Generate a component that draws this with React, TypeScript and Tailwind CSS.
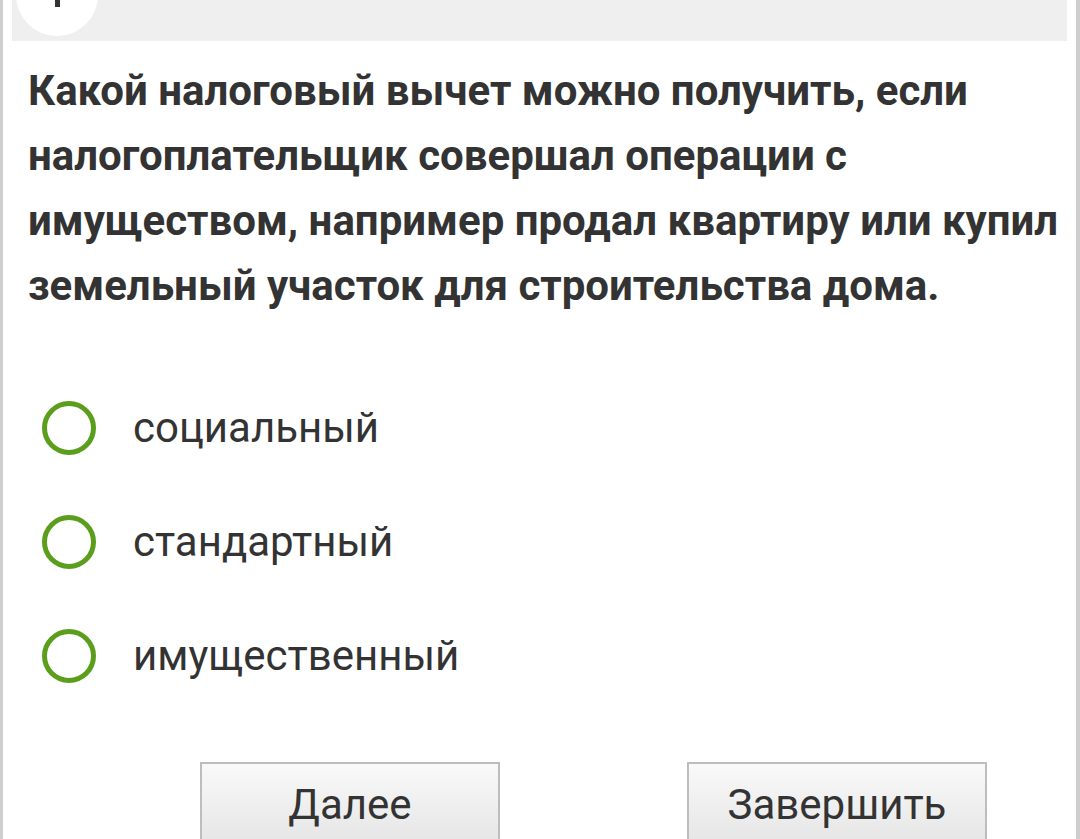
const OPTIONS = ["социальный", "стандартный", "имущественный"];

function Radio() {
  return <span className="block w-[54px] h-[54px] rounded-full border-[5px] border-[#5b9e1c] bg-white shrink-0" />;
}

export default function App() {
  return (
    <div className="w-[1080px] h-[839px] overflow-hidden bg-white font-['Roboto',sans-serif] text-[#333]">
      <div className="h-full border-l-[3px] border-r-[4px] border-[#cfcfcf] flex flex-col">
        {/* header band with question number */}
        <div className="mx-[9px] h-[41px] shrink-0 bg-[#efefef] relative overflow-hidden">
          <div className="absolute left-[4px] top-[-46px] w-[82px] h-[82px] rounded-full bg-white flex items-end justify-center">
            <span className="block w-[5px] h-[48px] bg-[#333] mb-[29px] ml-[1px]" />
          </div>
        </div>

        <div className="pl-[25px] pr-[8px] pt-[17px] shrink-0">
          <p className="font-bold text-[42px] leading-[65px]">
            Какой налоговый вычет можно получить, если налогоплательщик совершал операции с имуществом, например продал квартиру или купил земельный участок для строительства дома.
          </p>
        </div>

        <div className="pl-[39px] pt-[83px] flex flex-col gap-[60px] shrink-0">
          {OPTIONS.map((o) => (
            <label key={o} className="flex items-center gap-[37px] h-[54px]">
              <Radio />
              <span className="text-[42px] leading-none">{o}</span>
            </label>
          ))}
        </div>

        <div className="flex pl-[197px] gap-[187px] pt-[79px] shrink-0">
          {["Далее", "Завершить"].map((b) => (
            <button
              key={b}
              className="w-[300px] h-[90px] border-2 border-[#bdbdbd] bg-gradient-to-b from-[#f9f9f9] to-[#e4e4e4] text-[42px] text-[#333] pt-[6px] flex justify-center items-start leading-[70px]"
            >
              {b}
            </button>
          ))}
        </div>
      </div>
    </div>
  );
}
